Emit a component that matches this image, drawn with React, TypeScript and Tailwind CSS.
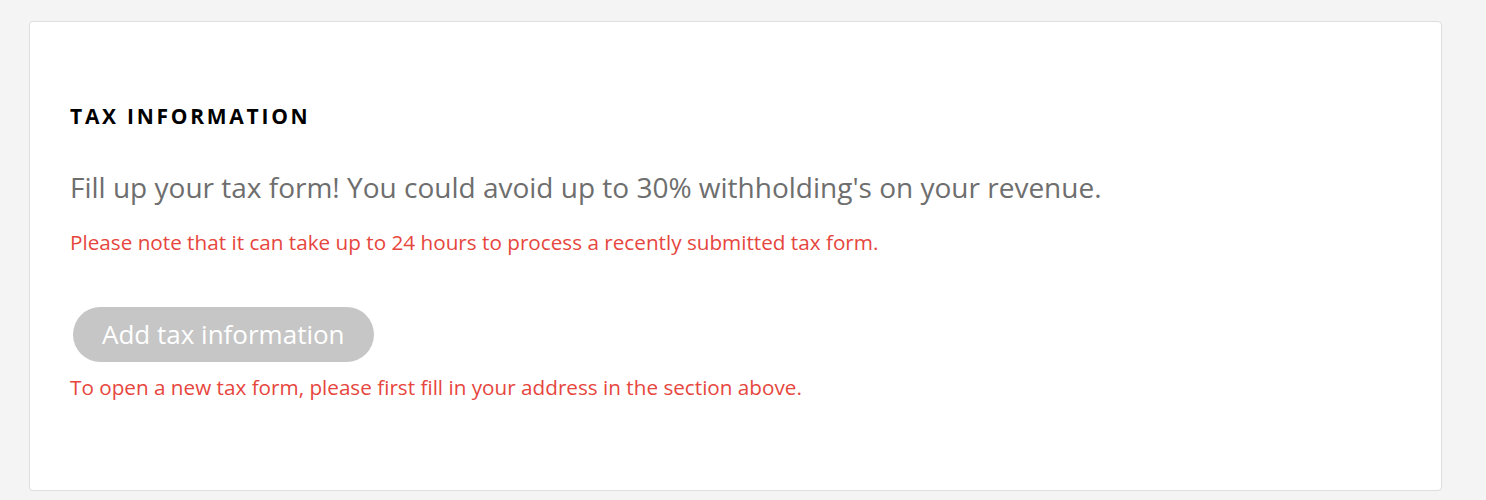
export default function App() {
  return (
    <div className="min-h-[500px] bg-[#f4f4f4] px-[29px] pt-[21px] pb-[9px] font-['Open_Sans',sans-serif]">
      <section className="w-[1413px] h-[470px] rounded-[4px] border border-[#dedede] bg-white px-10 pt-[79px]">
        <h2 className="text-[21px] leading-[30px] font-bold tracking-[0.13em] text-black">TAX INFORMATION</h2>
        <p className="mt-[38px] text-[28px] leading-[36px] text-[#6e6e6e]">
          Fill up your tax form! You could avoid up to 30% withholding's on your revenue.
        </p>
        <p className="mt-[24px] text-[20.7px] leading-[26px] text-[#e6463d]">
          Please note that it can take up to 24 hours to process a recently submitted tax form.
        </p>
        <button
          disabled
          className="mt-[52px] ml-[3px] block h-[55px] rounded-full bg-[#c6c6c6] px-[29px] text-[26px] text-white"
        >
          Add tax information
        </button>
        <p className="mt-[12px] text-[20.7px] leading-[26px] text-[#e6463d]">
          To open a new tax form, please first fill in your address in the section above.
        </p>
      </section>
    </div>
  );
}
